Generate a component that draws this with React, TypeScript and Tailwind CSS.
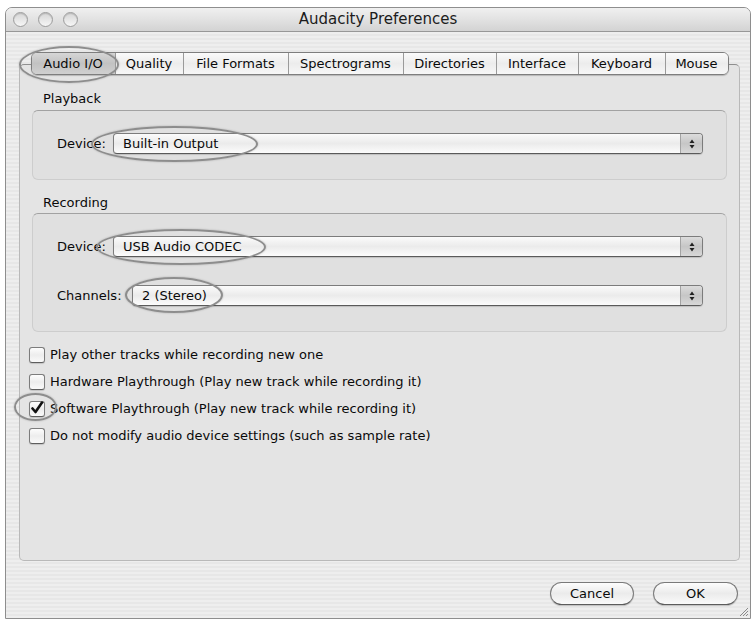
import React from 'react';

const tabs: { label: string; w: number }[] = [
  { label: 'Audio I/O', w: 83 },
  { label: 'Quality', w: 68 },
  { label: 'File Formats', w: 105 },
  { label: 'Spectrograms', w: 115 },
  { label: 'Directories', w: 93 },
  { label: 'Interface', w: 82 },
  { label: 'Keyboard', w: 87 },
  { label: 'Mouse', w: 63 },
];

const options = [
  { label: 'Play other tracks while recording new one', checked: false },
  { label: 'Hardware Playthrough (Play new track while recording it)', checked: false },
  { label: 'Software Playthrough (Play new track while recording it)', checked: true },
  { label: 'Do not modify audio device settings (such as sample rate)', checked: false },
];

// popup button with the little up/down stepper on the right
const Popup: React.FC<{ value: string }> = ({ value }) => (
  <div className="flex-1 h-[21px] flex border border-[#7c7c7c] border-b-[#5a5a5a] rounded-[4px] overflow-hidden bg-gradient-to-b from-[#fbfbfb] via-[#ebebeb] to-[#fcfcfc] shadow-[0_1px_1px_rgba(0,0,0,0.15)]">
    <span className="flex-1 pl-[9px] leading-[19px] text-[#0a0a0a]">{value}</span>
    <div className="w-[22px] flex items-center justify-center border-l border-[#a3a3a3] bg-gradient-to-b from-[#dcdcdc] via-[#c6c6c6] to-[#d8d8d8]">
      <svg width="8" height="12" viewBox="0 0 8 12">
        <path d="M4 1.5 L6.5 5 L1.5 5 Z" fill="#222" />
        <path d="M4 10.5 L6.5 7 L1.5 7 Z" fill="#222" />
      </svg>
    </div>
  </div>
);

const Ring: React.FC<{ className: string }> = ({ className }) => (
  <div className={`absolute rounded-[50%] border-[2.5px] border-[#8d8d8d] shadow-[0_0_2px_rgba(0,0,0,0.25)] pointer-events-none ${className}`} />
);

const stripes =
  'bg-[repeating-linear-gradient(180deg,#eeeeee_0px,#eeeeee_2px,#e7e7e7_2px,#e7e7e7_4px)]';

export default function App() {
  return (
    <div className="relative w-[756px] h-[623px] bg-white overflow-hidden pt-[7px] pl-[5px] font-['DejaVu_Sans',sans-serif] text-[13px] text-[#0a0a0a]">
      <div className={`relative w-[746px] h-[612px] flex flex-col border border-[#8e8e8e] rounded-t-[7px] overflow-hidden ${stripes}`}>
        {/* Title bar */}
        <div className="h-[24px] shrink-0 grid grid-cols-[1fr_auto_1fr] items-center border-b border-[#979797] bg-gradient-to-b from-[#f0f0f0] via-[#e2e2e2] to-[#d3d3d3]">
          <div className="flex items-center gap-[10px] pl-[7px]">
            {[0, 1, 2].map((i) => (
              <span
                key={i}
                className="w-[15px] h-[15px] rounded-full border border-[#9c9c9c] bg-gradient-to-b from-[#d6d6d6] to-[#f6f6f6] shadow-[inset_0_1px_1px_rgba(0,0,0,0.15)]"
              />
            ))}
          </div>
          <div className="text-[15px] text-[#1c1c1c]">Audacity Preferences</div>
          <div />
        </div>

        {/* Body */}
        <div className="flex-1 flex flex-col pl-[13px] pr-[10px] pt-[32px]">
          <div className="h-[497px] flex flex-col border border-[#b9b9b9] border-t-[#8f8f8f] rounded-[5px] bg-[#e4e4e4]">
            {/* Tabs */}
            <div className="flex justify-center -mt-[13px]">
              <div className="flex h-[23px] rounded-[6px] border border-[#7e7e7e] overflow-hidden shadow-[0_1px_1px_rgba(0,0,0,0.2)]">
                {tabs.map((t, i) => (
                  <div
                    key={t.label}
                    style={{ width: t.w }}
                    className={`flex items-center justify-center ${i > 0 ? 'border-l border-[#9a9a9a]' : ''} ${
                      i === 0
                        ? 'bg-gradient-to-b from-[#d6d6d6] via-[#c2c2c2] to-[#d0d0d0]'
                        : 'bg-gradient-to-b from-[#fbfbfb] via-[#ececec] to-[#f7f7f7]'
                    }`}
                  >
                    {t.label}
                  </div>
                ))}
              </div>
            </div>

            {/* Playback */}
            <div className="pl-[23px] mt-[16px] leading-[16px]">Playback</div>
            <div className="mx-[12px] mt-[3px] border border-[#cdcdcd] border-t-[#a2a2a2] rounded-[6px] bg-[#e0e0e0] pt-[22px] pb-[25px] pl-[24px] pr-[23px]">
              <div className="flex items-center">
                <span className="w-[56px]">Device:</span>
                <Popup value="Built-in Output" />
              </div>
            </div>

            {/* Recording */}
            <div className="pl-[23px] mt-[15px] leading-[16px]">Recording</div>
            <div className="mx-[12px] mt-[2px] border border-[#cdcdcd] border-t-[#a2a2a2] rounded-[6px] bg-[#e0e0e0] pt-[22px] pb-[25px] pl-[24px] pr-[23px] flex flex-col gap-[28px]">
              <div className="flex items-center">
                <span className="w-[56px]">Device:</span>
                <Popup value="USB Audio CODEC" />
              </div>
              <div className="flex items-center">
                <span className="w-[75px]">Channels:</span>
                <Popup value="2 (Stereo)" />
              </div>
            </div>

            {/* Options */}
            <div className="mt-[9px] pl-[9px] flex flex-col">
              {options.map((o) => (
                <div key={o.label} className="h-[27px] flex items-center gap-[5px]">
                  <span className="w-[16px] h-[16px] rounded-[3px] border border-[#7c7c7c] border-b-[#5e5e5e] bg-gradient-to-b from-[#fdfdfd] via-[#ededed] to-[#fafafa] flex items-center justify-center shadow-[0_1px_1px_rgba(0,0,0,0.15)]">
                    {o.checked && (
                      <svg width="14" height="14" viewBox="0 0 14 14" className="-mt-[2px]">
                        <path d="M2.5 7.5 L5.5 11 L12 1.5" fill="none" stroke="#111" strokeWidth="2.6" strokeLinecap="round" strokeLinejoin="round" />
                      </svg>
                    )}
                  </span>
                  <span>{o.label}</span>
                </div>
              ))}
            </div>
          </div>

          {/* Buttons */}
          <div className="mt-[21px] mr-[2px] flex justify-end gap-[19px]">
            <button className="w-[84px] h-[23px] rounded-full border border-[#7a7a7a] border-b-[#5c5c5c] bg-gradient-to-b from-[#fdfdfd] via-[#ebebeb] to-[#fafafa] shadow-[0_1px_1px_rgba(0,0,0,0.2)]">
              Cancel
            </button>
            <button className="w-[85px] h-[23px] rounded-full border border-[#7a7a7a] border-b-[#5c5c5c] bg-gradient-to-b from-[#fdfdfd] via-[#ebebeb] to-[#fafafa] shadow-[0_1px_1px_rgba(0,0,0,0.2)]">
              OK
            </button>
          </div>
        </div>

        {/* Resize grip */}
        <svg className="absolute right-[1px] bottom-[1px]" width="12" height="12" viewBox="0 0 12 12">
          <path d="M11 3 L3 11 M11 6 L6 11 M11 9 L9 11" stroke="#8a8a8a" strokeWidth="1" />
        </svg>
      </div>

      {/* annotation rings */}
      <Ring className="left-[19px] top-[46px] w-[100px] h-[37px]" />
      <Ring className="left-[91px] top-[126px] w-[167px] h-[36px]" />
      <Ring className="left-[96px] top-[229px] w-[170px] h-[36px]" />
      <Ring className="left-[125px] top-[277px] w-[98px] h-[36px]" />
      <Ring className="left-[14px] top-[393px] w-[43px] h-[28px]" />
    </div>
  );
}
